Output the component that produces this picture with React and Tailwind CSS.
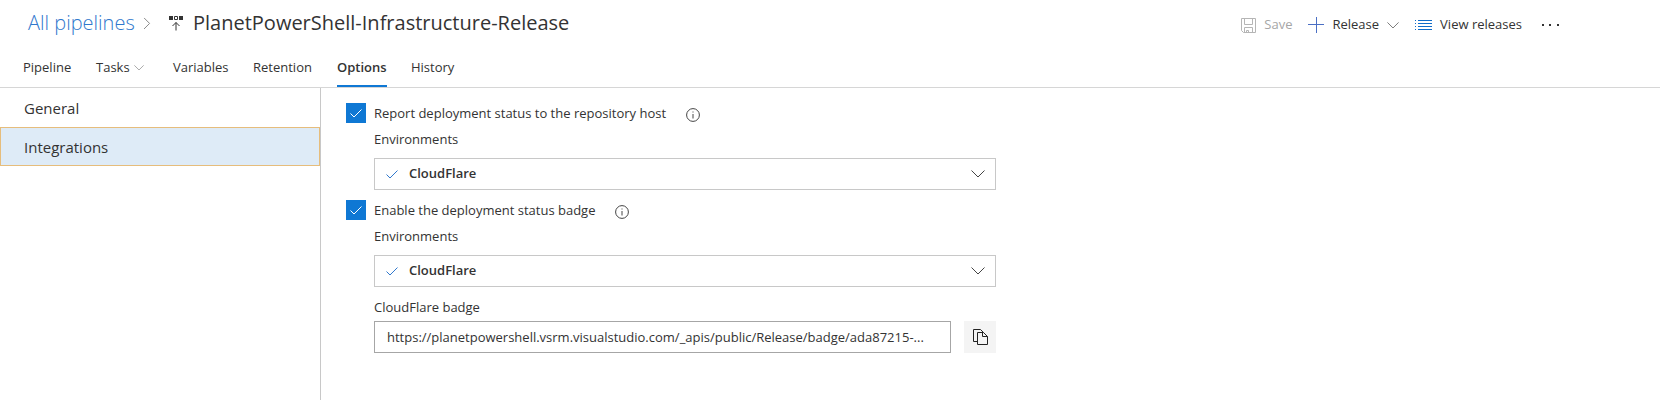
const tabs = [
  { name: "Pipeline", width: "w-[49px]" },
  { name: "Tasks", width: "w-[53px]", hasMenu: true },
  { name: "Variables", width: "w-[56px]" },
  { name: "Retention", width: "w-[60px]" },
  { name: "Options", width: "w-[50px]" },
  { name: "History", width: "w-[44px]" },
];

const badgeUrl =
  "https://planetpowershell.vsrm.visualstudio.com/_apis/public/Release/badge/ada87215-...";

function Chevron({ className }) {
  return (
    <svg viewBox="0 0 14 8" fill="none" stroke="currentColor" className={className} aria-hidden="true">
      <path d="M0.5 0.5 7 7 13.5 0.5" />
    </svg>
  );
}

function Check({ className }) {
  return (
    <svg viewBox="0 0 12 9" fill="none" stroke="currentColor" className={className} aria-hidden="true">
      <path d="M0.5 4.5 4 8 11.5 0.5" />
    </svg>
  );
}

function ReleaseIcon() {
  return (
    <svg width="14" height="15" viewBox="0 0 14 15" className="shrink-0" aria-hidden="true">
      <path d="M0 0h4v4H0zM10 0h4v4h-4z" fill="#333" />
      <path d="M5.5 0.5h3v3h-3z" fill="none" stroke="#333" />
      <path d="M7 14.5V6.5M3.5 10 7 6.5 10.5 10" fill="none" stroke="#333" />
    </svg>
  );
}

function SaveIcon() {
  return (
    <svg width="15" height="15" viewBox="0 0 15 15" fill="none" stroke="#b5b5b5" aria-hidden="true">
      <path d="M0.5 0.5h14v14H2.5l-2-2zM3.5 0.5v6h8v-6M3.5 14.5v-5h8v5M5.5 14.5v-2h2v2" />
    </svg>
  );
}

function ListIcon() {
  return (
    <svg width="17" height="11" viewBox="0 0 17 11" stroke="#0f6cc9" aria-hidden="true">
      <path d="M3 0.5h14M3 3.5h14M3 6.5h14M3 9.5h14" />
      <path d="M0 0.5h1M0 3.5h1M0 6.5h1M0 9.5h1" />
    </svg>
  );
}

function InfoIcon() {
  return (
    <svg width="14" height="14" viewBox="0 0 14 14" fill="none" stroke="#444" aria-hidden="true">
      <circle cx="7" cy="7" r="6.4" />
      <path d="M7 6v4.5M7 3.5v1" />
    </svg>
  );
}

function CopyIcon() {
  return (
    <svg width="15" height="17" viewBox="0 0 15 17" fill="none" stroke="#222" aria-hidden="true">
      <path d="M4.5 12.5h-4V0.5h7l3 3" />
      <path d="M4.5 3.5h6l4 4v8h-10zM9.5 3.5v4h5" />
    </svg>
  );
}

function Header() {
  return (
    <header className="border-b border-[#d6d6d6]">
      <div className="flex h-12 items-center justify-between pl-7 pr-[101px]">
        <div className="flex items-center pb-[2px] text-xl">
          <a href="#pipelines" className="w-[105px] whitespace-nowrap font-light text-[#3078cd]">
            All pipelines
          </a>
          <Chevron className="ml-2 w-3 -rotate-90 text-[#777]" />
          <span className="ml-4">
            <ReleaseIcon />
          </span>
          <h1 className="ml-[10px] whitespace-nowrap">PlanetPowerShell-Infrastructure-Release</h1>
        </div>

        <div className="flex items-center whitespace-nowrap pt-[2px]">
          <button disabled className="flex items-center gap-2 text-[#a6a6a6]">
            <SaveIcon />
            Save
          </button>
          <button className="ml-4 flex items-center gap-2">
            <svg width="16" height="16" viewBox="0 0 16 16" stroke="#4b6fc4" aria-hidden="true">
              <path d="M0 7.5h16M8.5 0v16" />
            </svg>
            Release
            <Chevron className="w-3 text-[#666]" />
          </button>
          <button className="ml-4 flex items-center gap-2">
            <ListIcon />
            View releases
          </button>
          <button aria-label="More actions" className="ml-5">
            <svg width="17" height="2" viewBox="0 0 17 2" fill="#333" aria-hidden="true">
              <path d="M0 0h2v2H0zM7 0h2v2H7zM15 0h2v2h-2z" />
            </svg>
          </button>
        </div>
      </div>

      <nav className="flex gap-6 px-[23px]">
        {tabs.map((tab) => (
          <a
            key={tab.name}
            href={`#${tab.name.toLowerCase()}`}
            className={`flex h-[39px] items-center gap-1 whitespace-nowrap border-b-2 pt-[2px] ${tab.width} ${
              tab.name === "Options" ? "border-[#0f78d4] font-semibold" : "border-transparent"
            }`}
          >
            {tab.name}
            {tab.hasMenu && <Chevron className="w-[10px] text-[#888]" />}
          </a>
        ))}
      </nav>
    </header>
  );
}

function CheckOption({ id, label }) {
  return (
    <div className="flex h-5 items-center">
      <span className="relative flex size-5 shrink-0">
        <input
          id={id}
          type="checkbox"
          defaultChecked
          className="peer size-5 appearance-none border border-[#0f78d4] checked:bg-[#0f78d4]"
        />
        <Check className="pointer-events-none absolute left-1 top-[6px] hidden w-3 text-white peer-checked:block" />
      </span>
      <label htmlFor={id} className="ml-2 pt-[2px]">
        {label}
      </label>
      <button aria-label={`About: ${label}`} className="ml-5 pt-[3px]">
        <InfoIcon />
      </button>
    </div>
  );
}

function EnvironmentSelect({ id }) {
  return (
    <div className="ml-7 mt-1">
      <label htmlFor={id} className="block h-6 leading-6">
        Environments
      </label>
      <div className="relative mt-[7px]">
        <select
          id={id}
          className="h-8 w-full appearance-none border border-[#c8c8c8] bg-white pl-[34px] pr-8 font-semibold"
        >
          <option>CloudFlare</option>
        </select>
        <Check className="pointer-events-none absolute left-3 top-3 w-3 text-[#3078cd]" />
        <Chevron className="pointer-events-none absolute right-[11px] top-3 w-[14px] text-[#444]" />
      </div>
    </div>
  );
}

function Sidebar() {
  return (
    <nav className="w-[321px] shrink-0 border-r border-[#c8c8c8] text-[15px]">
      <a href="#general" className="flex h-[39px] items-center pl-6 pt-[2px]">
        General
      </a>
      <a
        href="#integrations"
        aria-current="page"
        className="flex h-[39px] items-center border border-[#e6bd7c] bg-[#deebf7] pl-[23px] pt-[2px]"
      >
        Integrations
      </a>
    </nav>
  );
}

function App() {
  return (
    <div className="flex min-h-screen flex-col bg-white font-['Open_Sans','Noto_Sans',sans-serif] text-[13px] text-[#333]">
      <Header />
      <div className="flex flex-1">
        <Sidebar />
        <main className="min-w-0 max-w-[675px] flex-1 pl-[25px] pt-[15px]">
          <CheckOption id="report-status" label="Report deployment status to the repository host" />
          <EnvironmentSelect id="report-environments" />
          <div className="mt-[10px]">
            <CheckOption id="enable-badge" label="Enable the deployment status badge" />
            <EnvironmentSelect id="badge-environments" />
          </div>
          <div className="ml-7 mt-2">
            <label htmlFor="badge-url" className="block h-6 leading-6">
              CloudFlare badge
            </label>
            <div className="mt-[2px] flex gap-[13px]">
              <input
                id="badge-url"
                readOnly
                value={badgeUrl}
                className="h-8 min-w-0 flex-1 text-ellipsis border border-[#a6a6a6] px-3"
              />
              <button aria-label="Copy badge URL" className="flex size-8 items-center justify-center bg-[#f4f4f4]">
                <CopyIcon />
              </button>
            </div>
          </div>
        </main>
      </div>
    </div>
  );
}

export default App;
